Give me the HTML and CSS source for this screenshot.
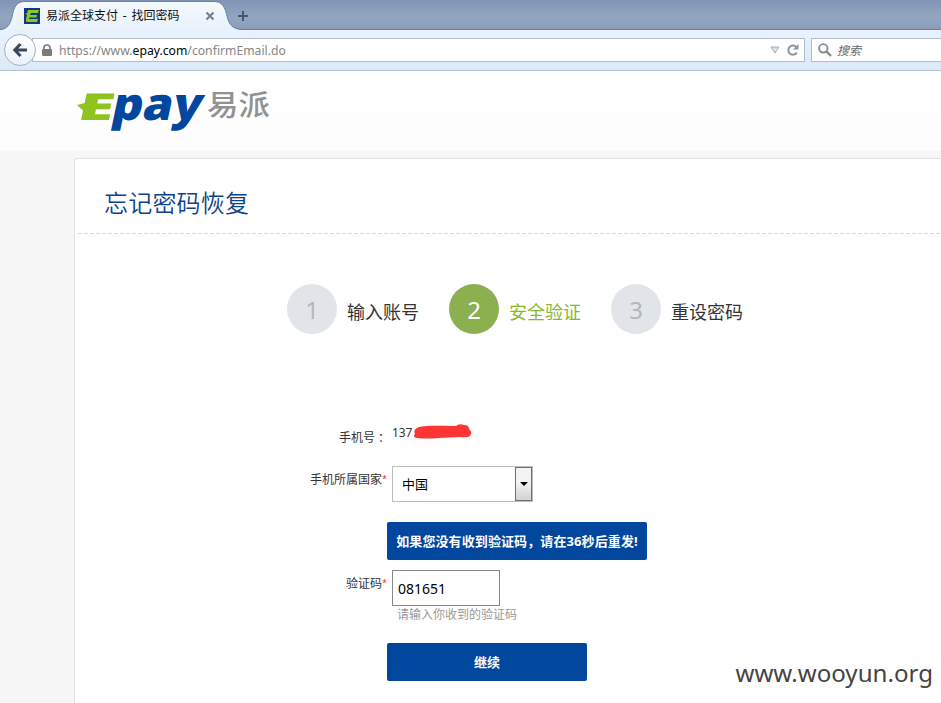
FILE: index.html
```html
<!DOCTYPE html>
<html lang="zh-CN">
<head>
<meta charset="utf-8">
<title>易派全球支付 - 找回密码</title>
<link rel="stylesheet" href="styles.css">
</head>
<body>
<div class="browser">
  <div class="tabbar">
    <svg class="tab-shape" width="242" height="30" viewBox="0 0 242 30">
      <defs><linearGradient id="tabFill" x1="0" y1="0" x2="0" y2="1"><stop offset="0" stop-color="#f5f9fd"/><stop offset="1" stop-color="#e8f1fb"/></linearGradient></defs>
      <path d="M0 30C7 29 10 25 12 17C14 6 17 1.500 25 1.500H214C223 1.500 225 8 227 16C229 25 233 29 242 30Z" fill="url(#tabFill)"/>
      <path d="M0 29.500C7 29 10 25 12 17C14 6 17 1.500 25 1.500H214C223 1.500 225 8 227 16C229 25 233 29 242 29.500" fill="none" stroke="#6f819b" stroke-width="1"/>
    </svg>
    <div class="tab">
      <svg class="favicon" width="16" height="16" viewBox="0 0 16 16"><rect width="16" height="16" fill="#0c3b83"/><path d="M4 2H15L14 5H7L6 7H13L12.500 9.500H5.500L5 11H14L13 14H3.500Q1.500 14 2 11L3 7L1 5.500H3Z" fill="#91c51f"/></svg>
      <span class="tab-title">易派全球支付 - 找回密码</span>
      <svg class="tab-close" width="10" height="10" viewBox="0 0 10 10"><path d="M1.500 1.500L8.500 8.500M8.500 1.500L1.500 8.500" stroke="#7d8289" stroke-width="2.200"/></svg>
      <svg class="tab-new" width="12" height="12" viewBox="0 0 12 12"><path d="M6 1V11M1 6H11" stroke="#46566e" stroke-width="2"/></svg>
    </div>
  </div>
  <div class="navbar">
    <div class="back"><svg width="18" height="18" viewBox="0 0 18 18"><path d="M9.500 3L3.800 9L9.500 15M4 9H16" fill="none" stroke="#3b4857" stroke-width="3"/></svg></div>
    <div class="urlbar">
      <svg class="lock" width="10" height="12" viewBox="0 0 10 12"><path d="M2 6V3.800Q2 1 5 1T8 3.800V6" fill="none" stroke="#7b7b7b" stroke-width="1.700"/><rect y="5" width="10" height="7" rx="1" fill="#7b7b7b"/></svg>
      <span class="url">https://www.<b>epay.com</b>/confirmEmail.do</span>
      <svg class="drop" width="10" height="8" viewBox="0 0 10 8"><path d="M1 1H9L5 7Z" fill="#dfe2e5" stroke="#a7adb3"/></svg>
      <svg class="reload" width="12" height="12" viewBox="0 0 12 12"><path d="M9.800 8.600A4.600 4.600 0 1 1 9.300 2.900" fill="none" stroke="#8c97a3" stroke-width="2"/><path d="M11.500 0V5.500H6Z" fill="#8c97a3"/></svg>
    </div>
    <div class="search">
      <svg width="14" height="14" viewBox="0 0 14 14"><circle cx="5.300" cy="5.300" r="4.200" fill="none" stroke="#858c94" stroke-width="1.900"/><path d="M8.300 8.300L13 13" stroke="#858c94" stroke-width="2.400"/></svg>
      <span>搜索</span>
    </div>
  </div>
</div>
<header class="site-header">
  <svg class="logo" width="210" height="80" viewBox="0 0 210 80">
    <path d="M1 34L9 32L8 40L4 37Z" fill="#8fc31f"/>
    <text class="logo-e" transform="translate(0 49) skewX(-12)" x="0" y="0" textLength="36" lengthAdjust="spacingAndGlyphs">E</text>
    <text class="logo-pay" transform="translate(34 49) skewX(-12)" x="0" y="0" textLength="90" lengthAdjust="spacingAndGlyphs">pay</text>
    <text class="logo-cn" x="131" y="45" textLength="63" lengthAdjust="spacingAndGlyphs">易派</text>
  </svg>
</header>
<main class="page">
  <section class="card">
    <h1>忘记密码恢复</h1>
    <svg class="divider" width="863" height="1"><path d="M0 .5H863" stroke="#dadada" stroke-dasharray="4 2"/></svg>
    <div class="steps">
      <span class="num">1</span><span class="step">输入账号</span>
      <span class="num on">2</span><span class="step current">安全验证</span>
      <span class="num">3</span><span class="step">重设密码</span>
    </div>
    <form class="form">
      <div class="row phone">
        <span class="label">手机号<span class="punct">：</span></span>
        <span class="phone-no">137</span>
        <svg class="scribble" width="60" height="16" viewBox="0 0 60 16"><path d="M4 4C10 1 24 2 43 2Q46-1 51 1Q56 1 56 5Q60 8 57 12Q54 14 47 13L26 14Q13 15 4 14Q-1 13 2 10Q0 6 4 4Z" fill="#fb3635"/></svg>
      </div>
      <div class="row country">
        <span class="label">手机所属国家<i>*</i></span>
        <div class="select"><span>中国</span><div class="arrow"><svg width="8" height="4" viewBox="0 0 8 4"><path d="M0 0H8L4 4Z"/></svg></div></div>
      </div>
      <div class="btn resend">如果您没有收到验证码，请在36秒后重发!</div>
      <div class="row code">
        <span class="label">验证码<i>*</i></span>
        <div class="field"><div class="input">081651</div><div class="hint">请输入你收到的验证码</div></div>
      </div>
      <div class="btn submit">继续</div>
    </form>
  </section>
  <div class="watermark">www.wooyun.org</div>
</main>
</body>
</html>
```
FILE: styles.css
```css
* { box-sizing: border-box; }
body {
  margin: 0;
  width: 941px;
  height: 703px;
  overflow: hidden;
  background: #f7f7f7;
  color: #333;
  font: 12px/18px "Noto Sans", "Noto Sans CJK SC", sans-serif;
  white-space: nowrap;
}
svg { display: block; flex: none; }

.browser { height: 71px; }
.tabbar {
  position: relative;
  height: 30px;
  background: linear-gradient(#8194b5, #92a6c2 60%, #8a9dbb);
  border-bottom: 1px solid #6d7f9a;
}
.tab-shape { position: absolute; left: 0; top: 0; }
.tab {
  position: relative;
  display: flex;
  align-items: center;
  height: 31px;
  padding-left: 24px;
  color: #111;
}
.tab-title { width: 140px; margin-left: 6px; word-spacing: 1.7px; }
.tab-close { margin-left: 19px; }
.tab-new { margin-left: 22px; }

.navbar {
  display: flex;
  align-items: center;
  height: 41px;
  padding-left: 4px;
  background: linear-gradient(#e9f2fc, #dce9f8);
  border-bottom: 1px solid #b3c0d1;
}
.back {
  position: relative;
  z-index: 1;
  display: flex;
  flex: none;
  align-items: center;
  justify-content: center;
  width: 32px;
  height: 32px;
  border: 1px solid #a5b1c1;
  border-radius: 50%;
  background: linear-gradient(#fff, #eaf1f9);
}
.urlbar {
  display: flex;
  flex: none;
  align-items: center;
  width: 773px;
  height: 24px;
  margin-left: -4px;
  padding-left: 9px;
  background: #fff;
  border: 1px solid #b1bdcc;
}
.url {
  width: 227px;
  margin-left: 7px;
  padding-top: 2px;
  color: #858585;
  font-size: 12.2px;
}
.url b { color: #000; font-weight: 400; }
.drop { margin-left: 484px; }
.reload { margin-left: 7px; }
.search {
  display: flex;
  flex: 1;
  align-items: center;
  height: 24px;
  margin-left: 6px;
  padding-left: 6px;
  background: #fff;
  border: 1px solid #b1bdcc;
  border-right: 0;
}
.search span { margin-left: 5px; padding-top: 2px; color: #666; font-style: italic; }

.site-header { height: 80px; padding-left: 76px; background: linear-gradient(#fff, #fdfdfd); }
.logo text { font-family: "Open Sans", sans-serif; font-weight: 800; }
.logo .logo-e { font-size: 37px; fill: #8fc31f; }
.logo .logo-pay { font-size: 45px; fill: #00479d; }
.logo .logo-cn { font-family: "Noto Sans CJK SC", sans-serif; font-size: 29px; font-weight: 500; fill: #929292; }

.page { position: relative; height: 552px; padding: 7px 0 0 74px; }
.card {
  height: 545px;
  background: #fff;
  border: 1px solid #e2e2e2;
  border-width: 1px 0 0 1px;
  border-radius: 3px 0 0 0;
}
h1 {
  height: 74px;
  margin: 0;
  padding: 26px 0 0 29px;
  color: #0b438d;
  font-size: 24px;
  font-weight: 350;
  letter-spacing: .2px;
  line-height: 36px;
}
.divider { margin-left: 3px; }
.steps { display: flex; padding: 50px 0 0 212px; }
.num {
  width: 50px;
  height: 50px;
  border-radius: 50%;
  background: #e1e4e9;
  color: #b4b6bb;
  font-size: 24px;
  line-height: 51px;
  text-align: center;
}
.num.on { background: #8ab04f; color: #fff; }
.step { width: 72px; margin: 0 30px 0 10px; font-size: 18px; line-height: 56px; }
.step.current { color: #87b92e; }

.form { padding: 81px 0 0 215px; }
.row { display: flex; }
.label { width: 97px; margin-right: 5px; text-align: right; }
.label i { position: relative; top: -2px; color: #e33; font-size: 9px; font-style: normal; line-height: 1; }
.punct { position: relative; left: 3px; }
.phone { height: 45px; }
.phone .label { padding-top: 8px; }
.phone-no { width: 20px; padding-top: 3px; letter-spacing: -.1px; }
.scribble { margin: 3px 0 0 1px; }
.country { height: 56px; }
.country .label { padding-top: 5px; }
.select {
  display: flex;
  align-items: center;
  justify-content: space-between;
  width: 141px;
  height: 36px;
  padding-left: 9px;
  border: 1px solid #bcbcbc;
  color: #000;
  font-size: 13px;
}
.arrow {
  display: flex;
  align-items: center;
  justify-content: center;
  width: 17px;
  height: 34px;
  border: 1px solid #707070;
  background: linear-gradient(#f3f3f3 45%, #d2d2d2);
}
.btn {
  height: 38px;
  margin-left: 97px;
  border-radius: 2px;
  background: #00479d;
  color: #fff;
  font-size: 13px;
  font-weight: 700;
  line-height: 39px;
  text-align: center;
}
.resend { width: 260px; letter-spacing: .1px; }
.submit { width: 200px; }
.code { height: 83px; padding-top: 10px; }
.code .label { padding-top: 5px; }
.input {
  width: 108px;
  height: 36px;
  padding-left: 5px;
  border: 1px solid #888;
  color: #000;
  font-size: 14px;
  line-height: 36px;
}
.hint { padding-left: 5px; color: #999; }
.watermark {
  position: absolute;
  right: 8px;
  bottom: 13px;
  color: #444;
  font-size: 24.1px;
  line-height: 34px;
}
```
